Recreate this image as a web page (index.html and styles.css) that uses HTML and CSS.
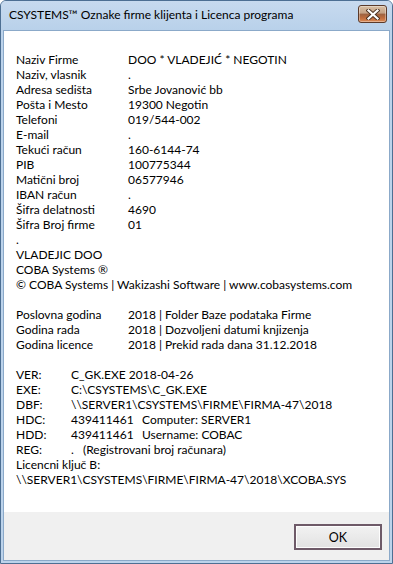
FILE: index.html
```html
<!DOCTYPE html>
<html lang="sr">
<head>
<meta charset="utf-8">
<title>CSYSTEMS Licenca</title>
<link rel="stylesheet" href="styles.css">
</head>
<body>
<div class="window">
  <div class="titlebar">
    <span class="title">CSYSTEMS™ Oznake firme klijenta i Licenca programa</span>
    <button class="close" aria-label="Close">
      <svg width="14" height="11" viewBox="0 0 14 11"><path d="M2.5 1.5 L11.5 9.5 M11.5 1.5 L2.5 9.5" stroke="#4a3020" stroke-width="4" stroke-linecap="square"/><path d="M2.5 1.5 L11.5 9.5 M11.5 1.5 L2.5 9.5" stroke="#ffffff" stroke-width="2.2" stroke-linecap="square"/></svg>
    </button>
  </div>
  <div class="client">
    <div class="content">
      <div class="grid g1">
        <span>Naziv Firme</span><span>DOO * VLADEJIĆ * NEGOTIN</span>
        <span>Naziv, vlasnik</span><span>.</span>
        <span>Adresa sedišta</span><span>Srbe Jovanović bb</span>
        <span>Pošta i Mesto</span><span>19300 Negotin</span>
        <span>Telefoni</span><span>019/544-002</span>
        <span>E-mail</span><span>.</span>
        <span>Tekući račun</span><span>160-6144-74</span>
        <span>PIB</span><span>100775344</span>
        <span>Matični broj</span><span>06577946</span>
        <span>IBAN račun</span><span>.</span>
        <span>Šifra delatnosti</span><span>4690</span>
        <span>Šifra Broj firme</span><span>01</span>
      </div>
      <div class="line">.</div>
      <div class="line">VLADEJIC DOO</div>
      <div class="line">COBA Systems ®</div>
      <div class="line">© COBA Systems | Wakizashi Software | www.cobasystems.com</div>
      <div class="grid g1 section">
        <span>Poslovna godina</span><span>2018 | Folder Baze podataka Firme</span>
        <span>Godina rada</span><span>2018 | Dozvoljeni datumi knjizenja</span>
        <span>Godina licence</span><span>2018 | Prekid rada dana 31.12.2018</span>
      </div>
      <div class="grid g2 section">
        <span>VER:</span><span>C_GK.EXE 2018-04-26</span>
        <span>EXE:</span><span>C:\CSYSTEMS\C_GK.EXE</span>
        <span>DBF:</span><span>\\SERVER1\CSYSTEMS\FIRME\FIRMA-47\2018</span>
        <span>HDC:</span><span><span class="num">439411461</span>Computer: SERVER1</span>
        <span>HDD:</span><span><span class="num">439411461</span>Username: COBAC</span>
        <span>REG:</span><span><span class="dot">.</span>(Registrovani broj računara)</span>
      </div>
      <div class="line">Licencni ključ B:</div>
      <div class="line">\\SERVER1\CSYSTEMS\FIRME\FIRMA-47\2018\XCOBA.SYS</div>
    </div>
    <div class="footer">
      <button class="ok">OK</button>
    </div>
  </div>
</div>
</body>
</html>
```
FILE: styles.css
```css
html, body {
  margin: 0;
  padding: 0;
}
body {
  width: 393px;
  height: 564px;
  overflow: hidden;
  font-family: Lato, "Noto Sans", sans-serif;
  font-size: 12px;
  color: #000;
}
.window {
  box-sizing: border-box;
  width: 393px;
  height: 564px;
  display: flex;
  flex-direction: column;
  background: #bcd3eb;
  border: 1px solid #4d6f93;
  border-radius: 6px 6px 0 0;
  padding: 0 2px 2px 2px;
}
.titlebar {
  height: 29px;
  flex: none;
  display: flex;
  align-items: flex-start;
  justify-content: space-between;
  background: linear-gradient(#c7daef, #b9d1ea);
  border-radius: 5px 5px 0 0;
  margin: 0 -2px;
  padding: 0 5px 0 8px;
}
.title {
  margin-top: 6px;
  font-size: 12px;
  color: #000;
  line-height: 16px;
}
.close {
  margin-top: 4px;
  width: 29px;
  height: 18px;
  padding: 0;
  border: 1px solid #5b3a2a;
  border-radius: 3px;
  background: linear-gradient(#d8bfa4 0%, #c4a184 45%, #9c6241 50%, #bf6c3c 75%, #dc8c58 100%);
  display: flex;
  align-items: center;
  justify-content: center;
  box-shadow: inset 0 0 0 1px rgba(255,255,255,0.35);
}
.client {
  flex: 1;
  display: flex;
  flex-direction: column;
  background: #fff;
  border: 1px solid #8ba9c9;
}
.content {
  flex: 1;
  padding: 21px 0 0 12px;
  line-height: 15px;
}
.grid {
  display: grid;
  grid-template-columns: 112px auto;
}
.g2 {
  grid-template-columns: 55px auto;
}
.section {
  margin-top: 15px;
}
.num {
  display: inline-block;
  width: 71px;
}
.dot {
  display: inline-block;
  width: 12px;
}
.footer {
  height: 48px;
  flex: none;
  background: #f0f0f0;
  display: flex;
  justify-content: flex-end;
  align-items: flex-start;
  padding: 12px 7px 0 0;
  box-sizing: border-box;
}
.ok {
  width: 88px;
  height: 26px;
  box-sizing: border-box;
  border: 2px solid #6e5a68;
  background: linear-gradient(#f2f2f2, #e2e2e2);
  box-shadow: inset 0 0 0 1px #fdfdfd;
  font-family: Lato, "Noto Sans", sans-serif;
  font-size: 12.5px;
  color: #000;
  padding: 0;
}
```
